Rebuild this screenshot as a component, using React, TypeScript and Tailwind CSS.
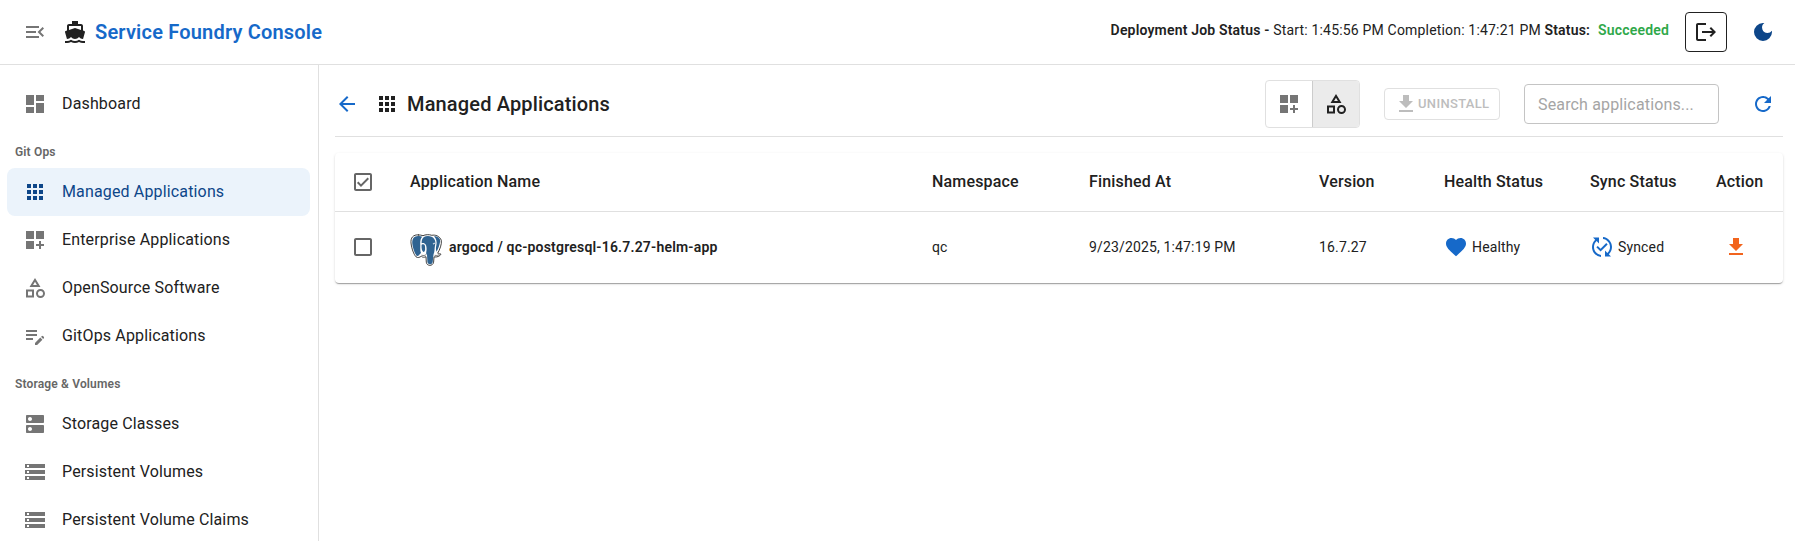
import React from 'react';
import {
  MdDashboard, MdApps, MdDashboardCustomize, MdOutlineCategory, MdStorage, MdDns, MdDirectionsBoat, MdEditNote,
  MdFavorite, MdPublishedWithChanges, MdArrowBack, MdRefresh, MdLogout, MdMenuOpen, MdDarkMode,
  MdOutlineCheckBox, MdCheckBoxOutlineBlank,
} from 'react-icons/md';

function DownloadIcon({ className }: { className: string }) {
  return (
    <svg viewBox="0 0 24 24" fill="currentColor" className={className}>
      <path d="M19 9h-4V3H9v6H5l7 7 7-7zM5 18v2h14v-2H5z" />
    </svg>
  );
}

function PostgresLogo() {
  return (
    <svg viewBox="0 0 32 32" className="mt-1.5 h-8 w-8" strokeLinejoin="round" strokeLinecap="round">
      <path
        fill="#fff"
        stroke="#2b2b2b"
        strokeWidth="0.900"
        d="M8.500 0.900C3 0.300 0.500 4 1 9C1.600 14.500 3.800 20.500 6 22.800C8 24.300 9.800 23.200 11.300 22.200C12.500 23.600 14.500 23.400 16 22.700L16.300 28.200C16.700 32.400 23 32.400 23.600 28.200L24 22.900C27 23.300 29.800 22.400 31 20.200C30.300 19.500 28.500 20.200 27.700 19.200C29.700 15.800 32 10 31.300 6.300C29.700 1.800 25 0.600 21.800 1.300C19 0.300 15.500 0.500 13 1.700C11.500 1.200 10 0.900 8.500 0.900Z"
      />
      <g fill="#2f6391">
        <path d="M9 2C4 1.500 1.900 5 2.300 9.500C2.900 14.500 4.800 20 6.800 21.900C8.300 22.500 9.500 20.700 11 18.800C10 17 10.300 14 10.300 11C10 7.800 10.300 5 12.200 2.800C11 2.300 10 2.100 9 2Z" />
        <path d="M14 2.900C17 1.500 22 1.700 24.200 5C25.800 7.500 25.500 9.500 25 11.500C24.300 14.500 24.900 17.500 23.500 20.500L22.700 28C22.200 31 17.900 31 17.400 28L17 20.800C15.300 20 16.800 17.500 16.600 14.500C16.500 11 15.200 8.500 11.700 9.200C11.500 6.500 12.200 4 14 2.900Z" />
        <path d="M11.600 10.700C13.500 9.700 14.900 10.300 15 12.500C15.100 15 15.500 16.500 14 18C12 17.500 11.400 14.500 11.600 10.700Z" />
        <path d="M24 2.200C28 2 30.700 4.500 30.100 7.700C29.500 11 28.200 14.800 26.500 17.700C25.500 15 26 13 26.400 11C27 8 26.500 4.700 24 2.200Z" />
      </g>
      <path stroke="#fff" strokeWidth="0.900" fill="none" d="M24.600 9.300C23.600 9 23 9.400 23.300 10" />
      <path stroke="#2b2b2b" strokeWidth="0.600" fill="none" d="M12 21.300C13.500 22 14.800 21.500 15.800 20.800M25 21.400C27 21.700 28.300 21.300 29 20.800" />
    </svg>
  );
}

type Icon = React.ComponentType<{ className?: string }>;

function NavItem({ icon: I, label, active = false }: { icon: Icon; label: string; active?: boolean }) {
  return (
    <li className={`flex h-12 items-center rounded-lg pl-4 ${active ? 'bg-[#ebf3fb] text-[#0d4689]' : ''}`}>
      <I className={`mr-[15px] size-6 ${active ? '' : 'text-[#757575]'}`} />
      <span className="text-base tracking-[0.15px]">{label}</span>
    </li>
  );
}

function NavHeading({ children }: { children: React.ReactNode }) {
  return <li className="flex h-10 items-center pl-2 pt-[7px] text-xs font-semibold tracking-[0.16px] text-[#666]">{children}</li>;
}

const th = 'text-left text-base font-medium tracking-[0.17px]';
const td = 'text-sm tracking-[0.15px]';

export default function App() {
  return (
    <div className="flex h-[541px] w-[1795px] flex-col overflow-hidden bg-white font-[Roboto,sans-serif] text-[#212121]">
      <header className="flex h-[65px] shrink-0 items-center border-b border-[#e0e0e0] pl-[23px] pr-5">
        <MdMenuOpen className="size-6 text-[#757575]" />
        <MdDirectionsBoat className="ml-4 size-6" />
        <h1 className="ml-2 text-xl font-semibold tracking-[0.19px] text-[#1669c9]">Service Foundry Console</h1>
        <p className="-mt-1 ml-auto mr-4 text-sm tracking-[0.18px]">
          <b className="font-semibold">Deployment Job Status - </b>Start: 1:45:56 PM Completion: 1:47:21 PM{' '}
          <b className="font-semibold">Status:</b>
          <b className="ml-2 font-semibold text-[#2fa84a]">Succeeded</b>
        </p>
        <button className="flex h-10 w-[42px] items-center justify-center rounded border border-[#212121]">
          <MdLogout className="size-6" />
        </button>
        <MdDarkMode className="ml-6 size-6 text-[#0d4689]" />
      </header>
      <div className="flex min-h-0 flex-1">
        <nav className="w-[319px] shrink-0 border-r border-[#e0e0e0] pl-[7px] pr-2 pt-[15px]">
          <ul>
            <NavItem icon={MdDashboard} label="Dashboard" />
            <NavHeading>Git Ops</NavHeading>
            <NavItem icon={MdApps} label="Managed Applications" active />
            <NavItem icon={MdDashboardCustomize} label="Enterprise Applications" />
            <NavItem icon={MdOutlineCategory} label="OpenSource Software" />
            <NavItem icon={MdEditNote} label="GitOps Applications" />
            <NavHeading>Storage &amp; Volumes</NavHeading>
            <NavItem icon={MdDns} label="Storage Classes" />
            <NavItem icon={MdStorage} label="Persistent Volumes" />
            <NavItem icon={MdStorage} label="Persistent Volume Claims" />
          </ul>
        </nav>
        <main className="flex-1 pl-4 pr-3">
          <div className="flex h-[72px] items-center border-b border-[#e0e0e0] pr-2 pt-[7px]">
            <MdArrowBack className="size-6 text-[#1669c9]" />
            <MdApps className="ml-4 size-6" />
            <h2 className="ml-2 text-xl font-medium tracking-[0.15px]">Managed Applications</h2>
            <div className="ml-auto flex h-12 w-[95px] overflow-hidden rounded border border-[#e0e0e0]">
              <button className="flex flex-1 items-center justify-center text-[#757575]"><MdDashboardCustomize className="size-6" /></button>
              <button className="flex flex-1 items-center justify-center border-l border-[#ccc] bg-[#ebebeb]"><MdOutlineCategory className="size-6" /></button>
            </div>
            <button className="ml-6 flex h-8 w-[116px] items-center rounded border border-[#e0e0e0] pl-[9px] text-[13px] font-medium tracking-[0.33px] text-[#bdbdbd]">
              <DownloadIcon className="size-6 shrink-0" />UNINSTALL
            </button>
            <input placeholder="Search applications..." className="ml-6 h-10 w-[195px] rounded border border-[#c4c4c4] px-[13px] text-base tracking-[0.15px] placeholder:text-[#a5a5a5]" />
            <MdRefresh className="ml-8 size-6 text-[#1669c9]" />
          </div>
          <table className="mt-4 w-full table-fixed rounded shadow-[0_2px_1px_-1px_rgba(0,0,0,0.2),0_1px_1px_0_rgba(0,0,0,0.14),0_1px_3px_0_rgba(0,0,0,0.12)]">
            <colgroup>
              <col className="w-[75px]" /><col className="w-[522px]" /><col className="w-[157px]" /><col className="w-[230px]" />
              <col className="w-[125px]" /><col className="w-[146px]" /><col className="w-[126px]" /><col className="w-[67px]" />
            </colgroup>
            <thead>
              <tr className="h-[58px] border-b border-[#e0e0e0]">
                <th className="pl-4"><MdOutlineCheckBox className="size-6 text-[#666]" /></th>
                <th className={th}>Application Name</th><th className={th}>Namespace</th><th className={th}>Finished At</th>
                <th className={th}>Version</th><th className={th}>Health Status</th><th className={th}>Sync Status</th><th className={th}>Action</th>
              </tr>
            </thead>
            <tbody>
              <tr className="h-[72px]">
                <td className="pl-4"><MdCheckBoxOutlineBlank className="size-6 text-[#666]" /></td>
                <td className={td}><div className="flex items-center gap-[7px] font-semibold tracking-[0.2px]"><PostgresLogo />argocd / qc-postgresql-16.7.27-helm-app</div></td>
                <td className={td}>qc</td>
                <td className={td}>9/23/2025, 1:47:19 PM</td>
                <td className={td}>16.7.27</td>
                <td className={td}><div className="flex items-center gap-1"><MdFavorite className="size-6 text-[#1669c9]" />Healthy</div></td>
                <td className={td}><div className="flex items-center gap-1"><MdPublishedWithChanges className="size-6 text-[#1669c9]" />Synced</div></td>
                <td className={td}><DownloadIcon className="ml-2 size-6 text-[#f2641d]" /></td>
              </tr>
            </tbody>
          </table>
        </main>
      </div>
    </div>
  );
}
